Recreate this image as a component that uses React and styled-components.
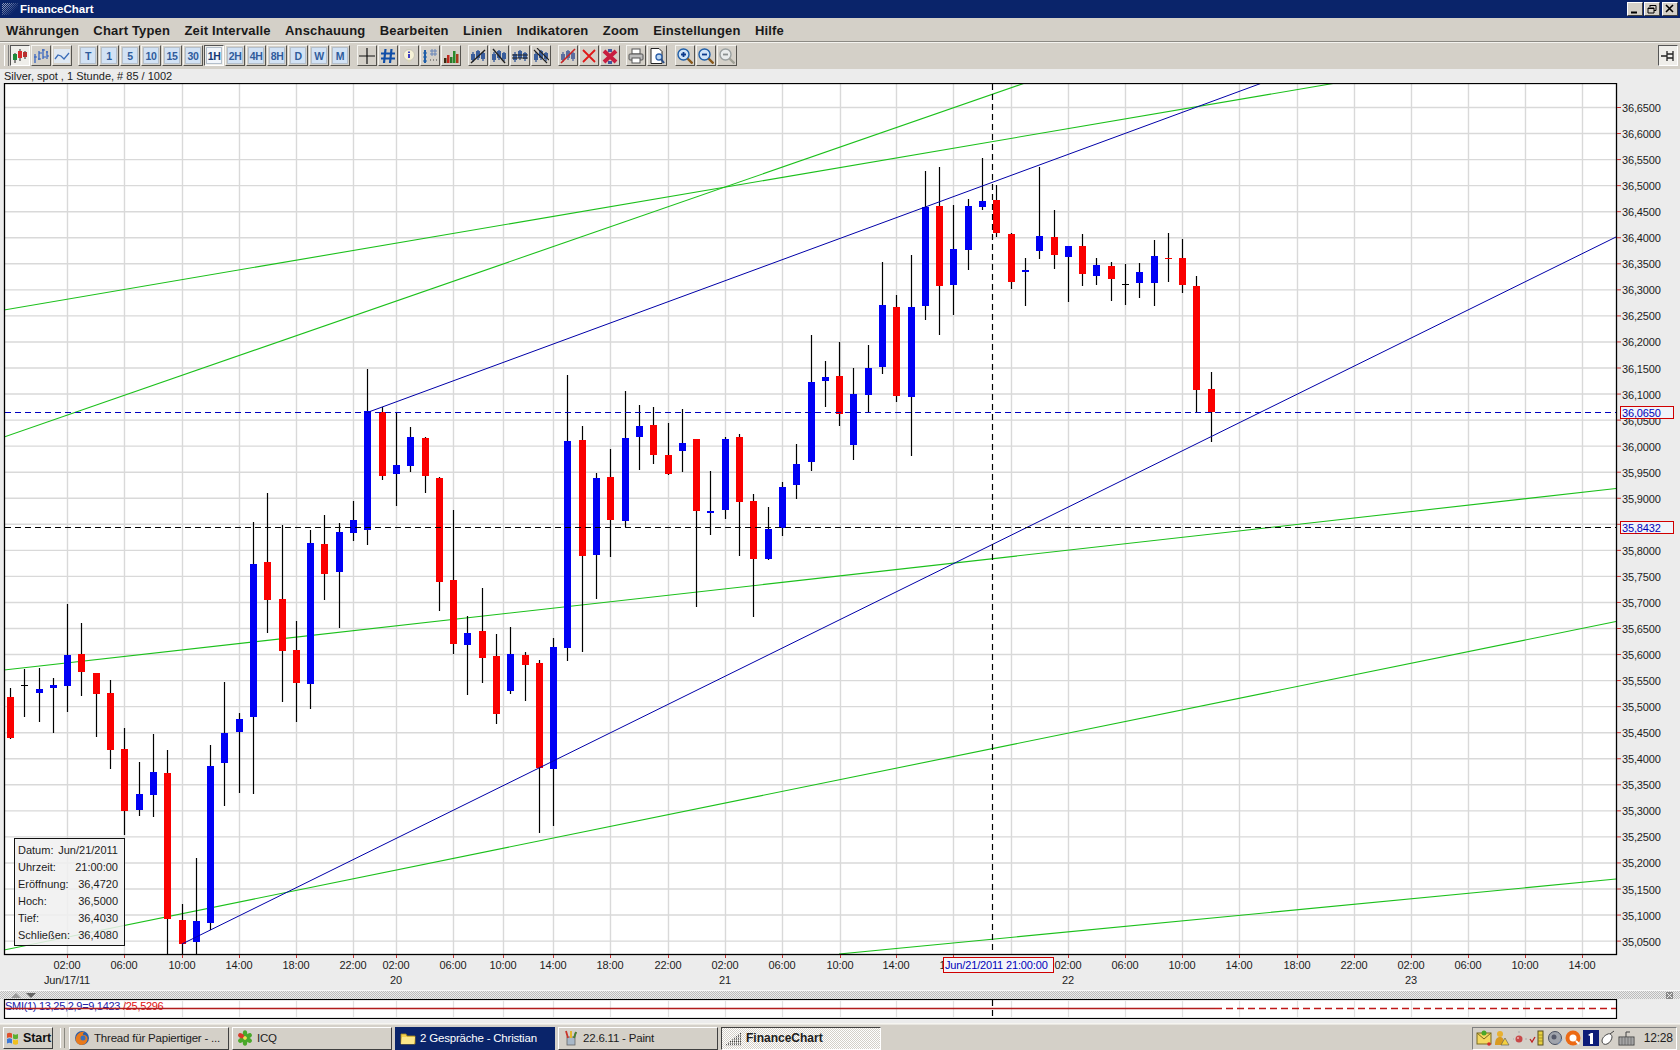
import React from 'react';
import styled, { createGlobalStyle } from 'styled-components';

const Global = createGlobalStyle`
  html, body { margin: 0; padding: 0; width: 1680px; height: 1050px; overflow: hidden; background: #ececec; }
  body { font-family: "Liberation Sans", Arial, sans-serif; }
  #root { width: 1680px; height: 1050px; }
`;

const Win = styled.div`
  width: 1680px; height: 1050px; display: flex; flex-direction: column; background: #ececec;
`;
const TitleBar = styled.div`
  height: 18px; background: #0a246a; display: flex; align-items: center; padding: 0 2px 0 2px;
`;
const TitleGrip = styled.span`
  width: 16px; height: 12px; margin-right: 2px;
  background-image: repeating-conic-gradient(#8b97b8 0 25%, #0a246a 0 50%);
  background-size: 2px 2px;
  mask-image: linear-gradient(135deg, #000 20%, transparent 75%);
`;
const TitleText = styled.span`
  color: #fff; font-weight: bold; font-size: 11.5px; flex: 1;
`;
const WinButtons = styled.div`display: flex; gap: 1px; margin-right: 0;`;
const WinBtn = styled.button`
  width: 16px; height: 14px; padding: 0; margin-left: ${p => p.$gap || 0}px; background: #d4d0c8;
  border: 1px solid; border-color: #fff #404040 #404040 #fff; display: flex; align-items: center; justify-content: center;
`;
const MenuBar = styled.div`
  height: 23px; box-sizing: content-box; background: #d4d0c8; border-bottom: 1px solid #8c8a84;
  display: flex; align-items: center; gap: 14.3px; padding-left: 6px;
`;
const MenuItem = styled.span`
  font-weight: bold; font-size: 13px; letter-spacing: .17px; color: #1a1a1a; margin-top: 2px;
`;
const Toolbar = styled.div`
  height: 27px; background: #d4d0c8; border-top: 1px solid #f4f3ef; box-sizing: border-box;
  display: flex; align-items: flex-start; padding: 2px 2px 0 4px;
`;
const Grip = styled.span`
  width: 3px; height: 21px; border-left: 1px solid #fff; border-right: 1px solid #808080; margin-right: 1px;
`;
const Group = styled.div`display: flex; gap: 1px; margin-left: ${p => p.$ml || 0}px;`;
const TBtn = styled.button`
  width: 20px; height: 21px; padding: 0; display: flex; align-items: center; justify-content: center;
  background: ${p => p.$on ? '#efeeea' : '#d4d0c8'};
  border: 1px solid; border-color: ${p => p.$on ? '#555 #fff #fff #555' : '#f4f3ef #55534e #55534e #f4f3ef'};
  box-sizing: border-box;
`;
const TimeFace = styled.span`
  width: 14px; height: 15px; display: flex; align-items: center; justify-content: center;
  background: ${p => p.$on ? '#f2f6fb' : '#d2e2f4'}; color: ${p => p.$on ? '#143a74' : '#2f5c9c'};
  font-weight: bold; font-size: 10.5px; letter-spacing: -.4px; box-shadow: 0 0 0 1px #b4bfcb;
`;
const Spacer = styled.div`flex: 1;`;
const InfoLine = styled.div`
  height: 14px; background: #ececec; font-size: 11px; line-height: 14px; color: #222; padding-left: 4px;
`;
const ChartWrap = styled.div`position: relative; height: 907px;`;
const ChartSvg = styled.svg`display: block;`;
const InfoBox = styled.div`
  position: absolute; left: 14px; top: 755px; width: 111px; height: 108px; box-sizing: border-box;
  border: 1.5px solid #111; background: rgba(240,240,240,.86); padding: 2px 6px 0 3px;
  display: grid; grid-auto-rows: 17px;
`;
const InfoRow = styled.div`
  display: flex; justify-content: space-between; align-items: center; font-size: 11px; color: #1c1c1c;
`;
const Splitter = styled.div`
  height: 9px; box-sizing: border-box; border-top: 1px solid #f8f8f8; display: flex; align-items: center; justify-content: space-between;
  padding: 0 7px 0 11px;
  background-image: repeating-conic-gradient(#bcbcbc 0 25%, #ececec 0 50%); background-size: 2px 2px;
`;
const SplitLeft = styled.div`display: flex; gap: 5px; align-items: center;`;
const Gap = styled.div`height: 4px;`;
const Taskbar = styled.div`
  height: 27px; box-sizing: border-box; background: #d4d0c8; border-top: 1px solid #f6f5f1; box-shadow: inset 0 1px 0 #e8e6e0;
  display: flex; align-items: center; padding: 2px 3px 0 3px;
`;
const StartBtn = styled.button`
  width: 50px; height: 22px; box-sizing: border-box; padding: 0 0 0 1px; display: flex; align-items: center; gap: 2px;
  background: #d4d0c8; border: 1px solid; border-color: #fff #404040 #404040 #fff;
  font: bold 12.5px "Liberation Sans", Arial, sans-serif; letter-spacing: -.1px; color: #111;
`;
const TaskSep = styled.span`
  width: 3px; height: 20px; margin: 0 4px 0 7px; border-left: 1px solid #fff; border-right: 1px solid #8a8880;
`;
const TaskBtn = styled.button`
  width: 160px; height: 23px; box-sizing: border-box; margin-right: 3px; padding: 0 0 0 4px; display: flex; align-items: center; gap: 4px;
  font: ${p => p.$active ? 'bold 12px' : '11.5px'} "Liberation Sans", Arial, sans-serif; text-align: left; white-space: nowrap;
  letter-spacing: ${p => p.$active ? '0' : '-.2px'};
  color: ${p => p.$flash ? '#fff' : '#1c1c1c'};
  background-color: ${p => p.$flash ? '#0a246a' : '#d4d0c8'};
  background-image: ${p => p.$active ? 'repeating-conic-gradient(#fff 0 25%, #d4d0c8 0 50%)' : 'none'};
  background-size: 2px 2px;
  border: 1px solid; border-color: ${p => p.$active ? '#404040 #fff #fff #404040' : p.$flash ? '#0a246a' : '#fff #404040 #404040 #fff'};
`;
const Tray = styled.div`
  margin-left: auto; width: 205px; height: 23px; box-sizing: border-box; border: 1px solid; border-color: #808080 #fff #fff #808080;
  display: flex; align-items: center; gap: 1.75px; padding-left: 3px; font-size: 12px; color: #1c1c1c;
`;
const Clock = styled.span`margin-left: 6px; letter-spacing: -.2px;`;

const AxisText = styled.text`font: 11px "Liberation Sans", Arial, sans-serif; fill: #1c1c1c; letter-spacing: -.15px;`;
const MarkerText = styled.text`font: 11px "Liberation Sans", Arial, sans-serif; fill: #0000b8; letter-spacing: -.15px;`;
const SmiText = styled.text`font: 11px "Liberation Sans", Arial, sans-serif; fill: ${p => p.$c}; letter-spacing: -.3px;`;

const BLUE = '#0000f4', RED = '#fa0000';
const candles = [
  [10.5,688,739,697,738,'r'],[24.3,669,717,685,686,'k'],[39.3,668,722,689,693,'b'],[53.3,678,733,685,688,'b'],
  [67.3,604,712,655,686,'b'],[81.3,623,696,654,672,'r'],[96.3,673,737,673,694,'r'],[110.3,680,769,693,750,'r'],
  [124.3,728,835,749,811,'r'],[139.3,762,816,794,810,'b'],[153.3,734,817,772,795,'b'],[167.3,750,954,773,919,'r'],
  [182.3,904,954,920,944,'r'],[196.3,858,954,921,942,'b'],[210.3,745,930,766,923,'b'],[224.3,682,806,733,763,'b'],
  [239.3,713,793,719,732,'b'],[253.3,522,794,564,717,'b'],[267.3,493,633,562,600,'r'],[282.3,525,702,599,651,'r'],
  [296.3,621,722,650,683,'r'],[310.3,530,709,543,684,'b'],[324.3,515,600,544,574,'r'],[339.3,523,628,532,572,'b'],
  [353.3,501,541,520,533,'b'],[367.3,369,545,411,530,'b'],[382.3,407,480,412,476,'r'],[396.3,412,506,465,474,'b'],
  [410.3,427,472,437,466,'b'],[425.3,437,493,438,476,'r'],[439.3,477,611,478,582,'r'],[453.3,510,654,580,644,'r'],
  [467.3,616,695,633,645,'b'],[482.3,588,683,631,658,'r'],[496.3,634,724,656,714,'r'],[510.3,627,694,654,691,'b'],
  [525.3,652,701,655,665,'r'],[539.3,660,833,663,768,'r'],[553.3,638,826,647,769,'b'],[567.3,375,661,441,648,'b'],
  [582.3,426,652,440,556,'r'],[596.3,473,599,478,555,'b'],[610.3,449,557,477,520,'r'],[625.3,391,527,438,521,'b'],
  [639.3,405,470,426,437,'b'],[653.3,407,464,425,455,'r'],[668.3,423,475,455,474,'r'],[682.3,409,472,443,451,'b'],
  [696.3,439,607,439,511,'r'],[710.3,471,535,511,513,'b'],[725.3,437,519,439,510,'b'],[739.3,434,556,437,502,'r'],
  [753.3,494,617,501,559,'r'],[768.3,507,560,529,559,'b'],[782.3,482,536,487,528,'b'],[796.3,444,499,464,485,'b'],
  [811.3,335,471,382,462,'b'],[825.3,361,407,377,381,'b'],[839.3,342,426,376,414,'r'],[853.3,368,460,394,445,'b'],
  [868.3,345,412,368,395,'b'],[882.3,262,374,305,367,'b'],[896.3,295,402,307,396,'r'],[911.3,255,456,307,397,'b'],
  [925.3,171,320,207,306,'b'],[939.3,167,335,206,286,'r'],[953.3,205,315,249,285,'b'],[968.3,199,270,206,250,'b'],
  [982.3,158,210,201,207,'b'],[996.3,185,237,200,233,'r'],[1011.3,233,289,234,282,'r'],[1025.3,258,306,270,272,'b'],
  [1039.3,167,259,236,251,'b'],[1054.3,210,269,237,255,'r'],[1068.3,246,302,246,257,'b'],[1082.3,234,286,246,274,'r'],
  [1096.3,258,285,265,276,'b'],[1111.3,262,301,266,279,'r'],[1125.3,264,305,284,285,'k'],[1139.3,263,298,272,283,'b'],
  [1154.3,240,306,256,283,'b'],[1168.3,233,282,258,259,'r'],[1182.3,239,293,258,285,'r'],[1196.3,276,413,286,390,'r'],
  [1211.3,372,442,389,412,'r'],
];
const xTicks = [[67,'02:00'],[124,'06:00'],[182,'10:00'],[239,'14:00'],[296,'18:00'],[353,'22:00'],[396,'02:00'],[453,'06:00'],[503,'10:00'],[553,'14:00'],[610,'18:00'],[668,'22:00'],[725,'02:00'],[782,'06:00'],[840,'10:00'],[896,'14:00'],[953,'18:00'],[1068,'02:00'],[1125,'06:00'],[1182,'10:00'],[1239,'14:00'],[1297,'18:00'],[1354,'22:00'],[1411,'02:00'],[1468,'06:00'],[1525,'10:00'],[1582,'14:00']];
const gridX = [...xTicks.map(t => t[0]), 1011];
const dates = [[67,'Jun/17/11'],[396,'20'],[725,'21'],[1068,'22'],[1411,'23']];
const prices = Array.from({ length: 33 }, (_, i) => ({ y: 107 + i * 26.05, t: (36.65 - i * 0.05).toFixed(4).replace('.', ',') }));
const trend = [
  ['#1cc01c',4,310,1336,83],['#1cc01c',4,437,1025,83],['#1cc01c',4,670,1616,488.5],['#1cc01c',4,950,1616,621.5],['#1cc01c',839,954,1616,879],
  ['#0000a8',370,411.5,1262,83],['#0000a8',182,944,1616,237],
];

function MainChart() {
  return (
    <ChartSvg width="1680" height="907" viewBox="0 83 1680 907">
      <defs><clipPath id="plot"><rect x="4" y="83" width="1613" height="871" /></clipPath></defs>
      <rect x="4.5" y="83.5" width="1612" height="871" fill="#fff" />
      {gridX.map(x => <line key={x} x1={x + .5} x2={x + .5} y1="84" y2="954" stroke="#d9d9d9" strokeWidth="1.4" />)}
      {prices.map(p => <line key={p.t} x1="5" x2="1616" y1={p.y + .5} y2={p.y + .5} stroke="#d9d9d9" strokeWidth="1.4" />)}
      <g clipPath="url(#plot)">
        {trend.slice(0, 5).map((l, i) => <line key={i} x1={l[1]} y1={l[2]} x2={l[3]} y2={l[4]} stroke={l[0]} strokeWidth="1.1" />)}
        {candles.map(([x, wt, wb, bt, bb, c], i) => {
          const cx = Math.floor(x) + .5;
          const col = c === 'b' ? BLUE : c === 'r' ? RED : '#000';
          return (
            <g key={i}>
              <line x1={cx} x2={cx} y1={wt} y2={wb} stroke="#000" strokeWidth="1.2" />
              <rect x={cx - 3.5} width="7" y={bt} height={bb - bt} fill={col} />
            </g>
          );
        })}
        {trend.slice(5).map((l, i) => <line key={i} x1={l[1]} y1={l[2]} x2={l[3]} y2={l[4]} stroke={l[0]} strokeWidth="1" />)}
        <line x1="5" x2="1616" y1="412.5" y2="412.5" stroke="#0000c0" strokeWidth="1.2" strokeDasharray="6 4" />
        <line x1="5" x2="1616" y1="527.5" y2="527.5" stroke="#000" strokeWidth="1.2" strokeDasharray="6 4" />
        <line x1="992.5" x2="992.5" y1="84" y2="954" stroke="#000" strokeWidth="1.2" strokeDasharray="6 4" />
      </g>
      <rect x="4.5" y="83.5" width="1612" height="871" fill="none" stroke="#000" strokeWidth="1.3" />
      {prices.map(p => (
        <g key={p.t}>
          <line x1="1617" x2="1621" y1={p.y + .5} y2={p.y + .5} stroke="#c03030" />
          <AxisText x="1622" y={p.y + 5}>{p.t}</AxisText>
        </g>
      ))}
      {xTicks.map(([x, t], i) => (
        <g key={i}>
          <line x1={x + .5} x2={x + .5} y1="955" y2="958" stroke="#c03030" />
          <AxisText x={x} y="969" textAnchor="middle">{t}</AxisText>
        </g>
      ))}
      {dates.map(([x, t]) => <AxisText key={t} x={x} y="984" textAnchor="middle">{t}</AxisText>)}
      <rect x="1620.5" y="406.5" width="53" height="12" fill="#f0f4fa" stroke="#d00000" />
      <MarkerText x="1622" y="416.5">36,0650</MarkerText>
      <rect x="1620.5" y="521.5" width="53" height="12" fill="#f0f4fa" stroke="#d00000" />
      <MarkerText x="1622" y="531.5">35,8432</MarkerText>
      <rect x="943.5" y="957.5" width="110" height="15" fill="#f4f4f8" stroke="#d00000" />
      <MarkerText x="945" y="969">Jun/21/2011 21:00:00</MarkerText>
    </ChartSvg>
  );
}

function SubChart() {
  return (
    <ChartSvg width="1680" height="20" viewBox="0 999 1680 20">
      <rect x="4.5" y="999.5" width="1612" height="19" fill="#fff" stroke="#000" strokeWidth="1.2" />
      {gridX.map(x => <line key={x} x1={x + .5} x2={x + .5} y1="1000" y2="1018" stroke="#e2e2e2" strokeWidth="1.2" />)}
      <SmiText x="5" y="1010" $c="#2020a8">SMI(1) 13,25,2,9=9,1423</SmiText>
      <SmiText x="123" y="1010" $c="#e01010">/25,5296</SmiText>
      <line x1="5" x2="1215" y1="1008.500" y2="1008.500" stroke="#b01c1c" strokeWidth="1.4" />
      <line x1="1215" x2="1616" y1="1008.500" y2="1008.500" stroke="#c01818" strokeWidth="1.4" strokeDasharray="7 4" />
      <line x1="992.5" x2="992.5" y1="1000" y2="1018" stroke="#000" strokeWidth="1.2" strokeDasharray="6 4" />
    </ChartSvg>
  );
}

const I = ({ children, w = 16, h = 16 }) => <svg width={w} height={h} viewBox={`0 0 ${w} ${h}`}>{children}</svg>;

const Bars = ({ c = '#3a5e9c' }) => (
  <>
    <path d="M3 4v10M8 2v10M13 4v9" stroke={c} strokeWidth="1.4" />
    <rect x="1" y="6" width="4" height="6" fill={c} /><rect x="6" y="3" width="4" height="7" fill={c} /><rect x="11" y="5" width="4" height="6" fill={c} />
  </>
);
const icons = {
  candle: <I><path d="M3 5v10M8 1v12M13 3v8" stroke="#222" /><rect x="1" y="6" width="4" height="6" fill="#1f8a3a" /><rect x="6" y="3" width="4" height="7" fill="#d52b2b" /><rect x="11" y="4" width="4" height="5" fill="#b83030" /></I>,
  ohlc: <I><path d="M2 6v9M1 9h3M6 3v9M5 11h3M6 5h3M10 1v10M9 2h3M10 9h3M14 3v8M13 4h2M14 8h2" stroke="#2c5ec0" strokeWidth="1.2" fill="none" /></I>,
  line: <I><rect x="0" y="1" width="16" height="14" fill="#dfe8f2" /><path d="M1 11l3-4 3 1 3 3 5-6" stroke="#3a6cb8" strokeWidth="1.3" fill="none" /></I>,
  cross: <I><path d="M8 0v16M0 8h16" stroke="#111" strokeWidth="1.2" /></I>,
  hash: <I><path d="M5.5 1l-1.5 14M11.5 1L10 15M1 5.5h14M1 10.5h14" stroke="#0f4ea8" strokeWidth="2.2" /></I>,
  info: <I><circle cx="8" cy="7" r="5.5" fill="#f6f2d6" stroke="#c8c6b8" /><path d="M6 12l2 3 2-3z" fill="#d8d4b8" /><path d="M8 3.6v1.4M8 6v4" stroke="#2a2ac0" strokeWidth="1.8" /></I>,
  dots: <I><path d="M3 2v13" stroke="#1f5ea8" strokeWidth="2" /><path d="M1 5h4M1 9h4M1 13h4" stroke="#1f5ea8" /><path d="M8 3h7M8 6h7M10 1v7M13 1v7" stroke="#6684b8" /><path d="M8 12h1M11 12h1M14 12h1" stroke="#444" /></I>,
  vol: <I><rect x="1" y="10" width="2.5" height="5" fill="#3a2a10" /><rect x="4" y="7" width="2.5" height="8" fill="#c0281c" /><rect x="7" y="9" width="2.5" height="6" fill="#2a7a2a" /><rect x="10" y="3" width="2.5" height="12" fill="#2a8a2a" /><rect x="13" y="6" width="2.5" height="9" fill="#a83a1c" /></I>,
  lineUp: <I><Bars /><path d="M1 15L15 2" stroke="#222" strokeWidth="1.4" /></I>,
  lineDown: <I><Bars /><path d="M2 1l12 14" stroke="#222" strokeWidth="1.4" /></I>,
  lineFlat: <I><Bars /><path d="M0 7h16M0 10h16" stroke="#222" strokeWidth="1.2" /></I>,
  lineDel: <I><Bars /><path d="M1 2l13 13M4 0l12 12" stroke="#222" strokeWidth="1.1" /></I>,
  slash: <I><Bars c="#5a6ea0" /><path d="M1 15L15 1" stroke="#cc2222" strokeWidth="1.6" /></I>,
  x: <I><path d="M2 2l12 12M14 2L2 14" stroke="#e01818" strokeWidth="1.8" /></I>,
  xx: <I><path d="M2 3l12 11M14 3L2 14" stroke="#c81e40" strokeWidth="4" /><path d="M6 1h4v3H6zM6 13h4v3H6z" fill="#40589c" /></I>,
  print: <I><rect x="4" y="1" width="8" height="5" fill="#fff" stroke="#555" /><rect x="1" y="6" width="14" height="6" rx="1" fill="#bdbdbd" stroke="#555" /><rect x="4" y="10" width="8" height="5" fill="#fff" stroke="#555" /></I>,
  preview: <I><path d="M2 .5h8l3 3v12H2z" fill="#fff" stroke="#222" /><circle cx="10" cy="9" r="3" fill="#bcd8f4" stroke="#2a5ea8" strokeWidth="1.3" /><path d="M12 11l3 4" stroke="#2a4e88" strokeWidth="2" /></I>,
  zin: <I><circle cx="6.5" cy="6.5" r="5.5" fill="#d0e2f6" stroke="#1f5ea8" strokeWidth="1.4" /><path d="M4 6.5h5M6.5 4v5" stroke="#0c3a8c" strokeWidth="1.8" /><path d="M10.5 10.5l5 5" stroke="#8a5a1c" strokeWidth="2.4" /></I>,
  zout: <I><circle cx="6.5" cy="6.5" r="5.5" fill="#d0e2f6" stroke="#1f5ea8" strokeWidth="1.4" /><path d="M4 6.5h5" stroke="#0c3a8c" strokeWidth="1.8" /><path d="M10.5 10.5l5 5" stroke="#8a5a1c" strokeWidth="2.4" /></I>,
  zoff: <I><circle cx="6.5" cy="6.5" r="5.5" fill="#e8ecec" stroke="#9aa0a0" strokeWidth="1.4" /><path d="M4 6.5h5" stroke="#8a9090" strokeWidth="1.8" /><path d="M10.5 10.5l5 5" stroke="#a0a096" strokeWidth="2.4" /></I>,
  pin: <I><path d="M1 8h6M7 3v10M7 6h6M7 10h6M13 3v10" stroke="#222" strokeWidth="1.3" fill="none" /></I>,
};

const flag = <I><path d="M2 3.5c2-1 3-1 5 0v4.5c-2-1-3-1-5 0z" fill="#e0502a" /><path d="M8 4c2 1 3 1 5 0v4.5c-2 1-3 1-5 0z" fill="#5cb030" /><path d="M2 9c2-1 3-1 5 0v4.5c-2-1-3-1-5 0z" fill="#3a78d8" /><path d="M8 9.500c2 1 3 1 5 0v4.500c-2 1-3 1-5 0z" fill="#f0c020" /></I>;
const firefox = <I><circle cx="8" cy="8" r="7" fill="#2c5ea8" /><path d="M1.500 9c1-5 5-8 9-7-2 1-2 2-1 3 3 0 4 2 4 4a6 6 0 0 1-12 0z" fill="#e87a1c" /><circle cx="9" cy="8" r="2.500" fill="#3a70bc" /></I>;
const icq = <I><g fill="#4aa82a">{[0, 60, 120, 180, 240].map(a => <ellipse key={a} cx="8" cy="3.500" rx="2.200" ry="3.200" transform={`rotate(${a} 8 8)`} />)}</g><ellipse cx="8" cy="3.500" rx="2.200" ry="3.200" fill="#d83a2a" transform="rotate(300 8 8)" /><circle cx="8" cy="8" r="1.800" fill="#f4e04a" /></I>;
const folder = <I><path d="M1 4h5l1 2h8v8H1z" fill="#f2d050" stroke="#a88a20" strokeWidth=".8" /><path d="M2 7h13l-1 7H1z" fill="#fae78a" /></I>;
const paint = <I><rect x="4" y="7" width="8" height="8" fill="#a8b8c8" stroke="#666" strokeWidth=".8" /><path d="M5 8L3 1M8 8V1M11 8l2-6" strokeWidth="1.800" stroke="#c8342a" /><path d="M8 8V1" stroke="#e8c42a" strokeWidth="1.800" /><path d="M11 8l2-6" stroke="#3a8a3a" strokeWidth="1.800" /></I>;
const appIcon = (
  <I>
    {Array.from({ length: 8 }, (_, r) => Array.from({ length: r + 1 }, (_, c) => (
      <rect key={`${r}-${c}`} x={14 - c * 2} y={r * 1.600 + 3} width="1" height="1" fill="#444" />
    )))}
  </I>
);
const tray = [
  <I key="a"><rect x="1" y="3" width="14" height="11" fill="#f4d860" stroke="#7a6a20" /><path d="M1 3l7 6 7-6" stroke="#7a6a20" fill="none" /><circle cx="8" cy="3" r="2.500" fill="#4aa82a" /><circle cx="13" cy="14" r="1.800" fill="#d82a2a" /></I>,
  <I key="b"><circle cx="6" cy="4" r="3" fill="#e8b030" /><path d="M1 15c0-6 2-8 5-8s4 2 4 8z" fill="#d89a20" /><path d="M11 8l4 7H7z" fill="#f4d040" stroke="#555" strokeWidth=".6" /></I>,
  <I key="c"><circle cx="7" cy="9" r="3.500" fill="#c84a4a" /><path d="M2 9h-1M13 9h2M7 3V1" stroke="#aaa" /><circle cx="6" cy="8" r="1" fill="#f0b0b0" /></I>,
  <I key="d"><path d="M1 9l2 3 3-5" stroke="#c02020" strokeWidth="1.300" fill="none" /><rect x="9" y="1" width="5" height="14" fill="#e8d040" stroke="#5a5020" /><path d="M9 5h5M9 8h5M9 11h5" stroke="#8a8020" strokeWidth=".7" /></I>,
  <I key="e"><circle cx="8" cy="8" r="6.500" fill="#a0a4ac" stroke="#4a5060" /><circle cx="7" cy="7" r="2.500" fill="#55596a" /><path d="M11 14c2-1 3-3 4-5" stroke="#7090c0" fill="none" /></I>,
  <I key="f"><circle cx="8" cy="8" r="7.500" fill="#ec6a14" /><circle cx="8" cy="8" r="3.500" fill="#fff" /><path d="M11 11l3 3" stroke="#fff" strokeWidth="2" /></I>,
  <I key="g"><rect x="0" y="0" width="16" height="16" fill="#0c1c78" /><path d="M5 5l3-2h2v11H7V6z" fill="#fff" /></I>,
  <I key="h"><path d="M8 4c-3 1-6 4-6 7 0 3 3 4 5 3 3-1 5-5 5-7 0-2-2-4-4-3z" fill="#fff" stroke="#444" /><path d="M10 4l4-3" stroke="#444" /></I>,
  <I key="i" w={18}><rect x="1" y="7" width="15" height="8" fill="#c8c8c8" stroke="#444" /><path d="M2 9h13M2 11h13M2 13h13M4 7v8M7 7v8M10 7v8M13 7v8" stroke="#555" strokeWidth=".6" /><path d="M8 7V2h4" stroke="#444" fill="none" /></I>,
];

const timeframes = ['T', '1', '5', '10', '15', '30', '1H', '2H', '4H', '8H', 'D', 'W', 'M'];
const menus = ['Währungen', 'Chart Typen', 'Zeit Intervalle', 'Anschauung', 'Bearbeiten', 'Linien', 'Indikatoren', 'Zoom', 'Einstellungen', 'Hilfe'];
const info = [['Datum:', 'Jun/21/2011'], ['Uhrzeit:', '21:00:00'], ['Eröffnung:', '36,4720'], ['Hoch:', '36,5000'], ['Tief:', '36,4030'], ['Schließen:', '36,4080']];

const Tools = ({ names, ml }) => (
  <Group $ml={ml}>
    {names.map(n => <TBtn key={n} $on={n === 'candle'}>{icons[n]}</TBtn>)}
  </Group>
);

export default function App() {
  return (
    <Win>
      <Global />
      <TitleBar>
        <TitleGrip />
        <TitleText>FinanceChart</TitleText>
        <WinButtons>
          <WinBtn><I w={10} h={10}><path d="M1 8.500h6" stroke="#000" strokeWidth="2" /></I></WinBtn>
          <WinBtn><I w={10} h={10}><path d="M3 1.500h6v5H7M1 4h6v5H1z M3 1v2M1 4.500h6" stroke="#000" fill="none" /></I></WinBtn>
          <WinBtn $gap={1}><I w={10} h={10}><path d="M1 1l7 7M8 1L1 8" stroke="#000" strokeWidth="1.600" /></I></WinBtn>
        </WinButtons>
      </TitleBar>
      <MenuBar>{menus.map(m => <MenuItem key={m}>{m}</MenuItem>)}</MenuBar>
      <Toolbar>
        <Grip />
        <Tools names={['candle', 'ohlc', 'line']} />
        <Group $ml={6}>
          {timeframes.map(t => <TBtn key={t} $on={t === '1H'}><TimeFace $on={t === '1H'}>{t}</TimeFace></TBtn>)}
        </Group>
        <Tools names={['cross', 'hash', 'info', 'dots', 'vol']} ml={7} />
        <Tools names={['lineUp', 'lineDown', 'lineFlat', 'lineDel']} ml={7} />
        <Tools names={['slash', 'x', 'xx']} ml={7} />
        <Tools names={['print', 'preview']} ml={6} />
        <Tools names={['zin', 'zout', 'zoff']} ml={8} />
        <Spacer />
        <TBtn $on>{icons.pin}</TBtn>
      </Toolbar>
      <InfoLine>Silver, spot , 1 Stunde, # 85 / 1002</InfoLine>
      <ChartWrap>
        <MainChart />
        <InfoBox>
          {info.map(([k, v]) => <InfoRow key={k}><span>{k}</span><span>{v}</span></InfoRow>)}
        </InfoBox>
      </ChartWrap>
      <Splitter>
        <SplitLeft>
          <I w={10} h={5}><path d="M5 0l5 5H0z" fill="#9a9a9a" /></I>
          <I w={10} h={5}><path d="M0 0h10L5 5z" fill="#666" /></I>
        </SplitLeft>
        <I w={7} h={7}><rect width="7" height="7" fill="#888" /><path d="M1 1l5 5M6 1L1 6" stroke="#eee" /></I>
      </Splitter>
      <SubChart />
      <Gap />
      <Taskbar>
        <StartBtn>{flag}Start</StartBtn>
        <TaskSep />
        <TaskBtn>{firefox}Thread für Papiertiger - ...</TaskBtn>
        <TaskBtn>{icq}ICQ</TaskBtn>
        <TaskBtn $flash>{folder}2 Gespräche - Christian</TaskBtn>
        <TaskBtn>{paint}22.6.11 - Paint</TaskBtn>
        <TaskBtn $active>{appIcon}FinanceChart</TaskBtn>
        <Tray>{tray}<Clock>12:28</Clock></Tray>
      </Taskbar>
    </Win>
  );
}
